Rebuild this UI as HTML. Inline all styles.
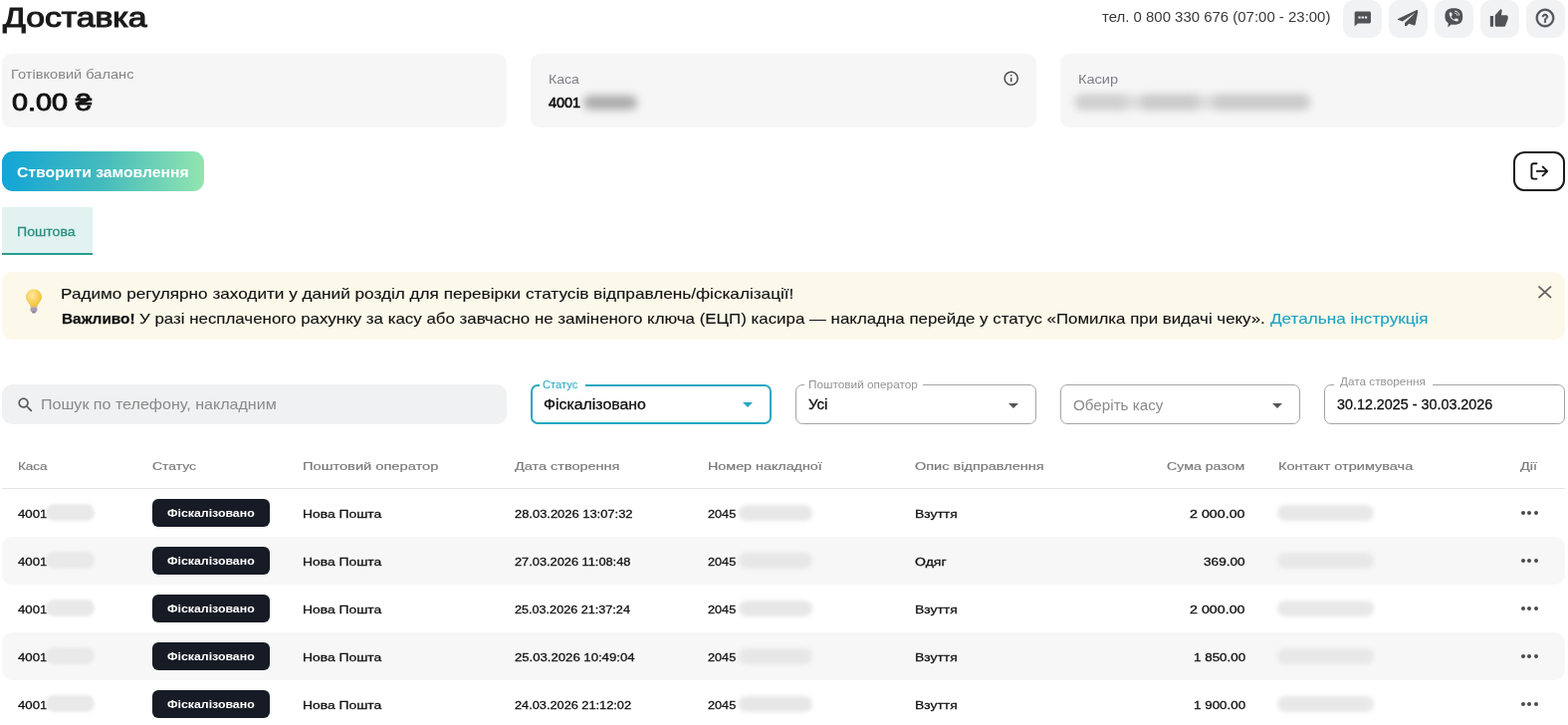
<!DOCTYPE html>
<html lang="uk">
<head>
<meta charset="utf-8">
<title>Доставка</title>
<style>
*{box-sizing:border-box;margin:0;padding:0}
html,body{width:1575px;height:728px;overflow:hidden;background:#fff}
body{font-family:"Liberation Sans",sans-serif;color:#111;position:relative}
.t{position:absolute;white-space:nowrap;transform-origin:0 50%}
.t a{color:#1fa3c4;text-decoration:none}
.p{position:absolute}
.ib{position:absolute;top:0;width:39px;height:38px;border-radius:11px;background:#f1f2f3}
.card{position:absolute;top:54px;height:73.8px;background:#f6f6f6;border-radius:9px}
.bl{position:absolute;border-radius:10px;filter:blur(3px);z-index:2}
.btn{position:absolute;left:2px;top:152px;width:202.5px;height:40px;border-radius:11px;background:linear-gradient(90deg,#12a5d6 0%,#45bbbd 50%,#92e5b0 100%)}
.out{position:absolute;left:1520.3px;top:152.2px;width:51.8px;height:40px;border:2px solid #1a1a1a;border-radius:11px;background:#fff}
.tab{position:absolute;left:1.5px;top:208px;width:91.8px;height:47.5px;background:#e1f2f1;border-bottom:2px solid #2a9d8f}
.alert{position:absolute;left:2px;top:272.5px;width:1570px;height:68.5px;border-radius:10px;background:#fdf9ea}
.search{position:absolute;left:2px;top:386px;width:506.5px;height:39.5px;border-radius:10px;background:#f0f1f2}
.sel{position:absolute;top:386px;height:40px;border:1px solid #a4a4a4;border-radius:7px;background:#fff}
.sel.act{border:2px solid #25a7c4}
.notch{position:absolute;height:4px;background:#fff}
.ar{position:absolute;width:0;height:0;border-left:5px solid transparent;border-right:5px solid transparent;border-top:5px solid #555}
.hl{position:absolute;left:2px;top:490px;width:1570px;height:1px;background:#e4e4e4}
.row{position:absolute;left:2px;width:1570px;height:48px;border-radius:10px;background:#f7f7f7}
.bdg{position:absolute;left:152.8px;width:118px;height:27.8px;border-radius:6px;background:#171b26}
.dots{position:absolute;left:1528px;width:17px;height:4px}
.dots i{position:absolute;top:0;width:4px;height:4px;border-radius:50%;background:#4a4a4a}

</style>
</head>
<body>
<!-- top icon buttons -->
<div class="ib" style="left:1348.5px"><svg class="p" style="left:10.200px;top:10.400px" width="19.600" height="18" viewBox="0 0 24 24" preserveAspectRatio="none"><path fill="#505356" d="M20 2H4c-1.1 0-1.99.9-1.99 2L2 22l4-4h14c1.1 0 2-.9 2-2V4c0-1.100-.9-2-2-2zM9.400 11.400H6.600V8.600h2.800zm4 0h-2.800V8.600h2.800zm4 0h-2.800V8.600h2.800z"/></svg></div>
<div class="ib" style="left:1394.6px"><svg class="p" style="left:9.400px;top:9.700px" width="20.500" height="16.500" viewBox="0 0 512 512" preserveAspectRatio="none"><path fill="#505356" d="M476 3.2L12.5 270.600c-18.100 10.400-15.800 35.600 2.200 43.200L121 358.400l287.300-253.200c5.500-4.900 13.300 2.600 8.600 8.300L176 407v80.500c0 23.600 28.500 32.900 42.500 15.800L282 426l124.600 52.200c14.200 6 30.400-2.900 33-18.200l72-432C515 7.800 493.300-6.800 476 3.200z"/></svg></div>
<div class="ib" style="left:1440.6px"><svg class="p" style="left:7.400px;top:6px" width="24" height="24" viewBox="0 0 24 24"><path fill="#505356" d="M12.300 2.200c6.200 0 8.900 2.300 8.900 8.300s-2.700 8.300-8.900 8.300c-.9 0-1.700-.05-2.500-.2l-3.500 3 .5-4.300C4.400 15.700 3.400 13.600 3.400 10.500c0-6 2.700-8.300 8.900-8.300z"/><g transform="translate(6.200 5) scale(0.5)"><path fill="#f1f2f3" d="M6.620 10.790c1.440 2.830 3.760 5.140 6.590 6.590l2.200-2.200c.27-.27.67-.36 1.020-.24 1.120.37 2.330.57 3.570.57.550 0 1 .45 1 1V20c0 .55-.45 1-1 1-9.390 0-17-7.610-17-17 0-.55.45-1 1-1h3.500c.55 0 1 .45 1 1 0 1.250.2 2.450.57 3.570.11.350.03.740-.25 1.020l-2.200 2.200z"/></g><path fill="none" stroke="#f1f2f3" stroke-width="1" stroke-linecap="round" d="M13.600 5.200c2.200.2 3.800 1.800 4 4M13.800 7.300c1 .1 1.800.9 1.900 1.900"/></svg></div>
<div class="ib" style="left:1486.8px"><svg class="p" style="left:9.300px;top:8px" width="19.500" height="21.400" viewBox="0 0 24 24" preserveAspectRatio="none"><path fill="#505356" d="M1 21h4V9H1v12zm22-11c0-1.100-.9-2-2-2h-6.310l.95-4.570.03-.32c0-.41-.17-.79-.44-1.060L14.170 1 7.590 7.590C7.220 7.950 7 8.450 7 9v10c0 1.100.9 2 2 2h9c.83 0 1.540-.5 1.840-1.220l3.020-7.050c.09-.23.14-.47.14-.73v-2z"/></svg></div>
<div class="ib" style="left:1533px"><svg class="p" style="left:8.350px;top:6.800px" width="22" height="22" viewBox="0 0 24 24"><path fill="#505356" stroke="#505356" stroke-width="0.500" d="M12 2C6.480 2 2 6.480 2 12s4.480 10 10 10 10-4.480 10-10S17.520 2 12 2zm0 18c-4.410 0-8-3.590-8-8s3.590-8 8-8 8 3.590 8 8-3.590 8-8 8z"/><g transform="translate(12 12.300) scale(0.780) translate(-12 -12)"><path fill="#505356" stroke="#505356" stroke-width="1.100" stroke-linejoin="round" d="M11 18h2v-2h-2v2zm1-12c-2.210 0-4 1.790-4 4h2c0-1.100.9-2 2-2s2 .9 2 2c0 2-3 1.750-3 5h2c0-2.250 3-2.500 3-5 0-2.210-1.790-4-4-4z"/></g></svg></div>

<!-- summary cards -->
<div class="card" style="left:2px;width:506.500px"></div>
<div class="card" style="left:533.300px;width:507.400px">
  <svg class="p" style="left:473.400px;top:16.300px" width="17.400" height="17.400" viewBox="0 0 24 24"><path fill="#4a4a4a" d="M11 7h2v2h-2zm0 4h2v6h-2zm1-9C6.480 2 2 6.480 2 12s4.480 10 10 10 10-4.480 10-10S17.520 2 12 2zm0 18c-4.410 0-8-3.590-8-8s3.590-8 8-8 8 3.590 8 8-3.590 8-8 8z"/></svg>
  <div class="bl" style="left:52.500px;top:41.500px;width:54px;height:14px;background:#a9a9a9;filter:blur(4px)"></div>
</div>
<div class="card" style="left:1065px;width:507px">
  <div class="bl" style="left:15px;top:42px;width:236px;height:13px;background:#dcdcdc;filter:blur(4px)"></div>
  <div class="bl" style="left:16px;top:42px;width:52px;height:13px;background:#cecece;filter:blur(4px)"></div>
  <div class="bl" style="left:80px;top:42px;width:60px;height:13px;background:#c9c9c9;filter:blur(4px)"></div>
  <div class="bl" style="left:153px;top:42px;width:97px;height:13px;background:#c9c9c9;filter:blur(4px)"></div>
</div>

<!-- actions -->
<div class="btn"></div>
<div class="out"><svg class="p" style="left:12px;top:7px" width="22" height="22" viewBox="0 0 22 22"><path fill="none" stroke="#151515" stroke-width="1.900" stroke-linecap="round" stroke-linejoin="round" d="M9.500 3.200H6.400a2 2 0 0 0-2 2v11.400a2 2 0 0 0 2 2h3.100M9.800 10.900h10M15.600 6.400l4.600 4.500-4.600 4.500"/></svg></div>
<div class="tab"></div>

<!-- alert -->
<div class="alert">
  <svg class="p" style="left:20.500px;top:16px" width="22" height="28" viewBox="0 0 22 28"><defs><radialGradient id="bg" cx="0.4" cy="0.35" r="0.7"><stop offset="0" stop-color="#fdeaa0"/><stop offset="0.6" stop-color="#f8cf55"/><stop offset="1" stop-color="#f0b93a"/></radialGradient></defs><path fill="url(#bg)" d="M11 1.500c-4.700 0-8 3.500-8 7.600 0 2.600 1.300 4.300 2.600 5.900 1 1.200 1.700 2.400 1.900 4h7c.2-1.600.9-2.800 1.900-4 1.300-1.600 2.600-3.300 2.600-5.900 0-4.100-3.300-7.600-8-7.600z"/><rect x="7.600" y="19.300" width="6.800" height="4.600" rx="1.200" fill="#a89db0"/><rect x="9" y="23.600" width="4" height="1.800" rx="0.900" fill="#8f8498"/></svg>
  <svg class="p" style="left:1543.300px;top:14.800px" width="13.500" height="12.500" viewBox="0 0 13.500 12.500"><path fill="none" stroke="#666" stroke-width="1.700" d="M0.500 0.500l12.500 11.500M13 0.500L0.500 12"/></svg>
</div>

<!-- filters -->
<div class="search"><svg class="p" style="left:13.900px;top:11px" width="19.200" height="19.200" viewBox="0 0 24 24"><path fill="#555" d="M15.500 14h-.79l-.28-.27C15.410 12.590 16 11.110 16 9.500 16 5.910 13.090 3 9.500 3S3 5.910 3 9.500 5.910 16 9.500 16c1.610 0 3.090-.59 4.230-1.570l.27.280v.79l5 4.990L20.490 19l-4.990-5zm-6 0C7.010 14 5 11.990 5 9.500S7.010 5 9.500 5 14 7.010 14 9.500 11.990 14 9.500 14z"/></svg></div>
<div class="sel act" style="left:532.800px;width:242.300px"><div class="notch" style="left:7.500px;top:-3px;width:46px"></div><div class="ar" style="left:211px;top:16.400px;border-top-color:#25a7c4"></div></div>
<div class="sel" style="left:798.700px;width:242.300px"><div class="notch" style="left:8px;top:-3px;width:119px"></div><div class="ar" style="left:212.900px;top:17.800px;border-width:5px 5px 0 5px"></div></div>
<div class="sel" style="left:1065px;width:241px"><div class="ar" style="left:211.700px;top:17.800px;border-width:5px 5px 0 5px"></div></div>
<div class="sel" style="left:1330.200px;width:242px"><div class="notch" style="left:9px;top:-3px;width:99px"></div></div>

<!-- table -->
<div class="hl"></div>
<div class="row" style="top:539px"></div>
<div class="row" style="top:635px"></div>
<div class="bdg" style="top:501.3px"></div>
<div class="bl" style="left:46px;top:506px;width:49px;height:16.500px;background:#e9e9e9;filter:blur(1.800px)"></div>
<div class="bl" style="left:742px;top:506.5px;width:74px;height:16.500px;background:#e7e7e7;filter:blur(2px)"></div>
<div class="bl" style="left:1283px;top:507px;width:97px;height:16px;background:#e8e8e8;filter:blur(2px)"></div>
<div class="dots" style="top:513.3px"><i style="left:0"></i><i style="left:6.300px"></i><i style="left:12.600px"></i></div>
<div class="bdg" style="top:549.3px"></div>
<div class="bl" style="left:46px;top:554px;width:49px;height:16.500px;background:#e9e9e9;filter:blur(1.800px)"></div>
<div class="bl" style="left:742px;top:554.5px;width:74px;height:16.500px;background:#e7e7e7;filter:blur(2px)"></div>
<div class="bl" style="left:1283px;top:555px;width:97px;height:16px;background:#e8e8e8;filter:blur(2px)"></div>
<div class="dots" style="top:561.3px"><i style="left:0"></i><i style="left:6.300px"></i><i style="left:12.600px"></i></div>
<div class="bdg" style="top:597.3px"></div>
<div class="bl" style="left:46px;top:602px;width:49px;height:16.500px;background:#e9e9e9;filter:blur(1.800px)"></div>
<div class="bl" style="left:742px;top:602.5px;width:74px;height:16.500px;background:#e7e7e7;filter:blur(2px)"></div>
<div class="bl" style="left:1283px;top:603px;width:97px;height:16px;background:#e8e8e8;filter:blur(2px)"></div>
<div class="dots" style="top:609.3px"><i style="left:0"></i><i style="left:6.300px"></i><i style="left:12.600px"></i></div>
<div class="bdg" style="top:645.3px"></div>
<div class="bl" style="left:46px;top:650px;width:49px;height:16.500px;background:#e9e9e9;filter:blur(1.800px)"></div>
<div class="bl" style="left:742px;top:650.5px;width:74px;height:16.500px;background:#e7e7e7;filter:blur(2px)"></div>
<div class="bl" style="left:1283px;top:651px;width:97px;height:16px;background:#e8e8e8;filter:blur(2px)"></div>
<div class="dots" style="top:657.3px"><i style="left:0"></i><i style="left:6.300px"></i><i style="left:12.600px"></i></div>
<div class="bdg" style="top:693.3px"></div>
<div class="bl" style="left:46px;top:698px;width:49px;height:16.500px;background:#e9e9e9;filter:blur(1.800px)"></div>
<div class="bl" style="left:742px;top:698.5px;width:74px;height:16.500px;background:#e7e7e7;filter:blur(2px)"></div>
<div class="bl" style="left:1283px;top:699px;width:97px;height:16px;background:#e8e8e8;filter:blur(2px)"></div>
<div class="dots" style="top:705.3px"><i style="left:0"></i><i style="left:6.300px"></i><i style="left:12.600px"></i></div>

<div class="t" style="left:2.66px;top:0.2px;font-size:28px;line-height:35px;font-weight:400;color:#1a1a1a;transform:scaleX(1.2022);-webkit-text-stroke:1.1px;">Доставка</div>
<div class="t" style="left:1106.50px;top:8.1px;font-size:14px;line-height:18px;font-weight:400;color:#3a3a3a;transform:scaleX(1.0681);">тел. 0 800 330 676 (07:00 - 23:00)</div>
<div class="t" style="left:10.83px;top:66.9px;font-size:12.5px;line-height:16px;font-weight:400;color:#858585;transform:scaleX(1.1690);">Готівковий баланс</div>
<div class="t" style="left:11.76px;top:86.5px;font-size:24.5px;line-height:31px;font-weight:400;color:#111;transform:scaleX(1.1751);-webkit-text-stroke:0.95px;">0.00 ₴</div>
<div class="t" style="left:551.18px;top:71.7px;font-size:12.5px;line-height:16px;font-weight:400;color:#7d7d86;transform:scaleX(1.1215);">Каса</div>
<div class="t" style="left:551.31px;top:93.5px;font-size:14px;line-height:18px;font-weight:400;color:#111;transform:scaleX(1.0326);-webkit-text-stroke:0.6px;">4001</div>
<div class="t" style="left:1082.83px;top:71.8px;font-size:12.5px;line-height:16px;font-weight:400;color:#7d7d86;transform:scaleX(1.1654);">Касир</div>
<div class="t" style="left:17.00px;top:163.3px;font-size:15px;line-height:19px;font-weight:700;color:#fff;transform:scaleX(1.0490);">Створити замовлення</div>
<div class="t" style="left:17.38px;top:224.7px;font-size:13px;line-height:16px;font-weight:400;color:#2a8f82;transform:scaleX(1.0850);-webkit-text-stroke:0.3px;">Поштова</div>
<div class="t" style="left:60.77px;top:285.7px;font-size:14.3px;line-height:18px;font-weight:400;color:#111;transform:scaleX(1.2008);-webkit-text-stroke:0.12px;">Радимо регулярно заходити у даний розділ для перевірки статусів відправлень/фіскалізації!</div>
<div class="t" style="left:61.83px;top:310.9px;font-size:14.3px;line-height:18px;font-weight:700;color:#111;transform:scaleX(1.0771);-webkit-text-stroke:0.25px;"><b>Важливо!</b></div>
<div class="t" style="left:140.47px;top:310.9px;font-size:14.3px;line-height:18px;font-weight:400;color:#111;transform:scaleX(1.1810);-webkit-text-stroke:0.12px;">У разі несплаченого рахунку за касу або завчасно не заміненого ключа (ЕЦП) касира — накладна перейде у статус «Помилка при видачі чеку».</div>
<div class="t" style="left:1275.57px;top:310.9px;font-size:14.3px;line-height:18px;font-weight:400;color:#1fa3c4;transform:scaleX(1.2003);-webkit-text-stroke:0.12px;"><a>Детальна інструкція</a></div>
<div class="t" style="left:41.17px;top:397.1px;font-size:14.2px;line-height:18px;font-weight:400;color:#8a8a8a;transform:scaleX(1.1316);">Пошук по телефону, накладним</div>
<div class="t" style="left:545.40px;top:378.9px;font-size:11px;line-height:14px;font-weight:400;color:#25a7c4;transform:scaleX(1.0178);">Статус</div>
<div class="t" style="left:545.57px;top:397.5px;font-size:13.8px;line-height:17px;font-weight:400;color:#111;transform:scaleX(1.1476);-webkit-text-stroke:0.3px;">Фіскалізовано</div>
<div class="t" style="left:812.00px;top:378.9px;font-size:11px;line-height:14px;font-weight:400;color:#939393;transform:scaleX(1.0725);">Поштовий оператор</div>
<div class="t" style="left:812.16px;top:397.5px;font-size:13.8px;line-height:17px;font-weight:400;color:#111;transform:scaleX(1.0865);-webkit-text-stroke:0.3px;">Усі</div>
<div class="t" style="left:1077.60px;top:398.3px;font-size:14.5px;line-height:18px;font-weight:400;color:#8a8a8a;transform:scaleX(1.0486);">Оберіть касу</div>
<div class="t" style="left:1346.20px;top:376.4px;font-size:11px;line-height:14px;font-weight:400;color:#939393;transform:scaleX(1.0702);">Дата створення</div>
<div class="t" style="left:1342.95px;top:397.2px;font-size:14.5px;line-height:18px;font-weight:400;color:#111;transform:scaleX(0.9889);-webkit-text-stroke:0.3px;">30.12.2025 - 30.03.2026</div>
<div class="t" style="left:18.42px;top:461.2px;font-size:11.6px;line-height:14px;font-weight:400;color:#7b7b7b;transform:scaleX(1.1642);-webkit-text-stroke:0.2px;">Каса</div>
<div class="t" style="left:153.12px;top:461.2px;font-size:11.6px;line-height:14px;font-weight:400;color:#7b7b7b;transform:scaleX(1.2010);-webkit-text-stroke:0.2px;">Статус</div>
<div class="t" style="left:304.13px;top:461.2px;font-size:11.6px;line-height:14px;font-weight:400;color:#7b7b7b;transform:scaleX(1.2629);-webkit-text-stroke:0.2px;">Поштовий оператор</div>
<div class="t" style="left:516.82px;top:461.2px;font-size:11.6px;line-height:14px;font-weight:400;color:#7b7b7b;transform:scaleX(1.2480);-webkit-text-stroke:0.2px;">Дата створення</div>
<div class="t" style="left:711.12px;top:461.2px;font-size:11.6px;line-height:14px;font-weight:400;color:#7b7b7b;transform:scaleX(1.2342);-webkit-text-stroke:0.2px;">Номер накладної</div>
<div class="t" style="left:918.53px;top:461.2px;font-size:11.6px;line-height:14px;font-weight:400;color:#7b7b7b;transform:scaleX(1.2503);-webkit-text-stroke:0.2px;">Опис відправлення</div>
<div class="t" style="left:1171.62px;top:461.2px;font-size:11.6px;line-height:14px;font-weight:400;color:#7b7b7b;transform:scaleX(1.2213);-webkit-text-stroke:0.2px;">Сума разом</div>
<div class="t" style="left:1284.13px;top:461.2px;font-size:11.6px;line-height:14px;font-weight:400;color:#7b7b7b;transform:scaleX(1.2524);-webkit-text-stroke:0.2px;">Контакт отримувача</div>
<div class="t" style="left:1527.32px;top:461.2px;font-size:11.6px;line-height:14px;font-weight:400;color:#7b7b7b;transform:scaleX(1.2442);-webkit-text-stroke:0.2px;">Дії</div>
<div class="t" style="left:17.97px;top:508.6px;font-size:11.8px;line-height:15px;font-weight:400;color:#111;transform:scaleX(1.1238);-webkit-text-stroke:0.3px;">4001</div>
<div class="t" style="left:168.40px;top:508.3px;font-size:11.3px;line-height:14px;font-weight:700;color:#fff;transform:scaleX(1.0913);">Фіскалізовано</div>
<div class="t" style="left:304.18px;top:508.6px;font-size:11.8px;line-height:15px;font-weight:400;color:#111;transform:scaleX(1.1743);-webkit-text-stroke:0.3px;">Нова Пошта</div>
<div class="t" style="left:516.76px;top:508.6px;font-size:11.8px;line-height:15px;font-weight:400;color:#111;transform:scaleX(1.0947);-webkit-text-stroke:0.3px;">28.03.2026 13:07:32</div>
<div class="t" style="left:711.16px;top:508.6px;font-size:11.8px;line-height:15px;font-weight:400;color:#111;transform:scaleX(1.0748);-webkit-text-stroke:0.3px;">2045</div>
<div class="t" style="left:918.58px;top:508.6px;font-size:11.8px;line-height:15px;font-weight:400;color:#111;transform:scaleX(1.1784);-webkit-text-stroke:0.3px;">Взуття</div>
<div class="t" style="left:1195.18px;top:508.6px;font-size:11.8px;line-height:15px;font-weight:400;color:#111;transform:scaleX(1.2088);-webkit-text-stroke:0.3px;">2 000.00</div>
<div class="t" style="left:17.97px;top:556.6px;font-size:11.8px;line-height:15px;font-weight:400;color:#111;transform:scaleX(1.1238);-webkit-text-stroke:0.3px;">4001</div>
<div class="t" style="left:168.40px;top:556.3px;font-size:11.3px;line-height:14px;font-weight:700;color:#fff;transform:scaleX(1.0913);">Фіскалізовано</div>
<div class="t" style="left:304.18px;top:556.6px;font-size:11.8px;line-height:15px;font-weight:400;color:#111;transform:scaleX(1.1743);-webkit-text-stroke:0.3px;">Нова Пошта</div>
<div class="t" style="left:516.76px;top:556.6px;font-size:11.8px;line-height:15px;font-weight:400;color:#111;transform:scaleX(1.0841);-webkit-text-stroke:0.3px;">27.03.2026 11:08:48</div>
<div class="t" style="left:711.16px;top:556.6px;font-size:11.8px;line-height:15px;font-weight:400;color:#111;transform:scaleX(1.0748);-webkit-text-stroke:0.3px;">2045</div>
<div class="t" style="left:918.58px;top:556.6px;font-size:11.8px;line-height:15px;font-weight:400;color:#111;transform:scaleX(1.1930);-webkit-text-stroke:0.3px;">Одяг</div>
<div class="t" style="left:1209.07px;top:556.6px;font-size:11.8px;line-height:15px;font-weight:400;color:#111;transform:scaleX(1.1542);-webkit-text-stroke:0.3px;">369.00</div>
<div class="t" style="left:17.97px;top:604.6px;font-size:11.8px;line-height:15px;font-weight:400;color:#111;transform:scaleX(1.1238);-webkit-text-stroke:0.3px;">4001</div>
<div class="t" style="left:168.40px;top:604.3px;font-size:11.3px;line-height:14px;font-weight:700;color:#fff;transform:scaleX(1.0913);">Фіскалізовано</div>
<div class="t" style="left:304.18px;top:604.6px;font-size:11.8px;line-height:15px;font-weight:400;color:#111;transform:scaleX(1.1743);-webkit-text-stroke:0.3px;">Нова Пошта</div>
<div class="t" style="left:516.76px;top:604.6px;font-size:11.8px;line-height:15px;font-weight:400;color:#111;transform:scaleX(1.0708);-webkit-text-stroke:0.3px;">25.03.2026 21:37:24</div>
<div class="t" style="left:711.16px;top:604.6px;font-size:11.8px;line-height:15px;font-weight:400;color:#111;transform:scaleX(1.0748);-webkit-text-stroke:0.3px;">2045</div>
<div class="t" style="left:918.58px;top:604.6px;font-size:11.8px;line-height:15px;font-weight:400;color:#111;transform:scaleX(1.1784);-webkit-text-stroke:0.3px;">Взуття</div>
<div class="t" style="left:1195.18px;top:604.6px;font-size:11.8px;line-height:15px;font-weight:400;color:#111;transform:scaleX(1.2088);-webkit-text-stroke:0.3px;">2 000.00</div>
<div class="t" style="left:17.97px;top:652.6px;font-size:11.8px;line-height:15px;font-weight:400;color:#111;transform:scaleX(1.1238);-webkit-text-stroke:0.3px;">4001</div>
<div class="t" style="left:168.40px;top:652.3px;font-size:11.3px;line-height:14px;font-weight:700;color:#fff;transform:scaleX(1.0913);">Фіскалізовано</div>
<div class="t" style="left:304.18px;top:652.6px;font-size:11.8px;line-height:15px;font-weight:400;color:#111;transform:scaleX(1.1743);-webkit-text-stroke:0.3px;">Нова Пошта</div>
<div class="t" style="left:516.77px;top:652.6px;font-size:11.8px;line-height:15px;font-weight:400;color:#111;transform:scaleX(1.1131);-webkit-text-stroke:0.3px;">25.03.2026 10:49:04</div>
<div class="t" style="left:711.16px;top:652.6px;font-size:11.8px;line-height:15px;font-weight:400;color:#111;transform:scaleX(1.0748);-webkit-text-stroke:0.3px;">2045</div>
<div class="t" style="left:918.58px;top:652.6px;font-size:11.8px;line-height:15px;font-weight:400;color:#111;transform:scaleX(1.1784);-webkit-text-stroke:0.3px;">Взуття</div>
<div class="t" style="left:1198.57px;top:652.6px;font-size:11.8px;line-height:15px;font-weight:400;color:#111;transform:scaleX(1.1359);-webkit-text-stroke:0.3px;">1 850.00</div>
<div class="t" style="left:17.97px;top:700.6px;font-size:11.8px;line-height:15px;font-weight:400;color:#111;transform:scaleX(1.1238);-webkit-text-stroke:0.3px;">4001</div>
<div class="t" style="left:168.40px;top:700.3px;font-size:11.3px;line-height:14px;font-weight:700;color:#fff;transform:scaleX(1.0913);">Фіскалізовано</div>
<div class="t" style="left:304.18px;top:700.6px;font-size:11.8px;line-height:15px;font-weight:400;color:#111;transform:scaleX(1.1743);-webkit-text-stroke:0.3px;">Нова Пошта</div>
<div class="t" style="left:516.76px;top:700.6px;font-size:11.8px;line-height:15px;font-weight:400;color:#111;transform:scaleX(1.0808);-webkit-text-stroke:0.3px;">24.03.2026 21:12:02</div>
<div class="t" style="left:711.16px;top:700.6px;font-size:11.8px;line-height:15px;font-weight:400;color:#111;transform:scaleX(1.0748);-webkit-text-stroke:0.3px;">2045</div>
<div class="t" style="left:918.58px;top:700.6px;font-size:11.8px;line-height:15px;font-weight:400;color:#111;transform:scaleX(1.1784);-webkit-text-stroke:0.3px;">Взуття</div>
<div class="t" style="left:1198.57px;top:700.6px;font-size:11.8px;line-height:15px;font-weight:400;color:#111;transform:scaleX(1.1359);-webkit-text-stroke:0.3px;">1 900.00</div>
</body>
</html>
